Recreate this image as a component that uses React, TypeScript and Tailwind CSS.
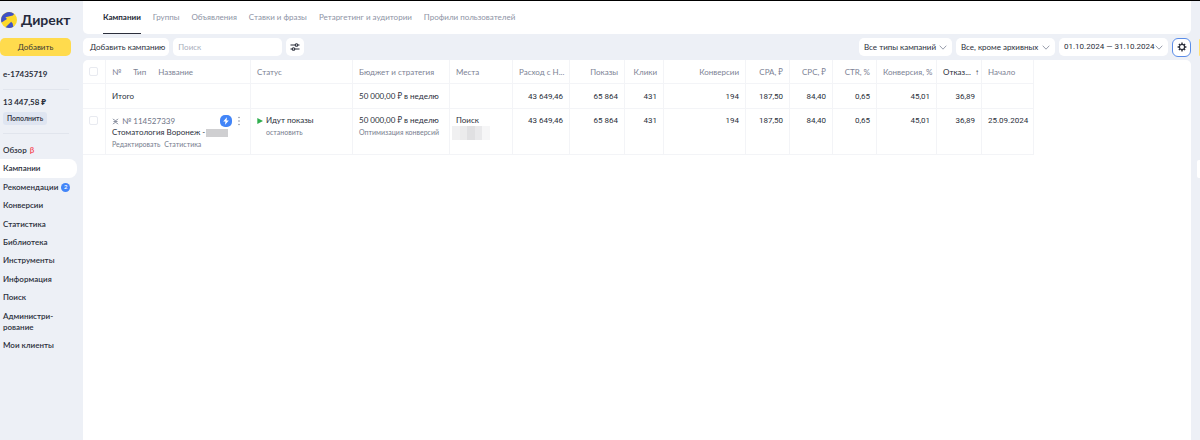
import type { ReactNode } from "react";

const tabs = ["Группы", "Объявления", "Ставки и фразы", "Ретаргетинг и аудитории", "Профили пользователей"];

const menu: { label: string; extra?: ReactNode; active?: boolean }[] = [
  { label: "Обзор", extra: <span className="text-[8px] font-bold text-[#f5525f]">β</span> },
  { label: "Кампании", active: true },
  {
    label: "Рекомендации",
    extra: (
      <span className="flex size-[9px] items-center justify-center rounded-full bg-[#4285f8] text-[6px] leading-none text-white">
        2
      </span>
    ),
  },
  { label: "Конверсии" },
  { label: "Статистика" },
  { label: "Библиотека" },
  { label: "Инструменты" },
  { label: "Информация" },
  { label: "Поиск" },
  { label: "Администри-\nрование" },
  { label: "Мои клиенты" },
];

const metrics = [
  { title: "Расход с Н...", value: "43 649,46" },
  { title: "Показы", value: "65 864" },
  { title: "Клики", value: "431" },
  { title: "Конверсии", value: "194" },
  { title: "CPA, ₽", value: "187,50" },
  { title: "CPC, ₽", value: "84,40" },
  { title: "CTR, %", value: "0,65" },
  { title: "Конверсия, %", value: "45,01" },
];

function Logo() {
  return (
    <svg viewBox="0 0 16 16" className="size-4 shrink-0" aria-hidden="true">
      <circle cx="8" cy="8" r="8" fill="#fcd92b" />
      <path d="M0.2 9.4A8 8 0 0 1 13.2 2L11.8 3.6L4.4 5.2L6 7L0.6 10.6Z" fill="#3f51c6" />
      <path d="M4.6 15.2L10.2 9.8L11.6 11.4L12.4 14.7Q8.6 17 4.6 15.2Z" fill="#3f51c6" />
    </svg>
  );
}

function Chevron() {
  return (
    <svg viewBox="0 0 8 5" className="pointer-events-none col-start-1 row-start-1 mr-[5px] h-[5px] w-2 self-center justify-self-end" aria-hidden="true">
      <path d="M0.7 0.7L4 4.2L7.3 0.7" fill="none" stroke="#8d93a3" strokeWidth="0.9" />
    </svg>
  );
}

function Dropdown({ label, text, className }: { label: string; text: string; className: string }) {
  return (
    <div className={`grid ${className}`}>
      <select aria-label={label} className="col-start-1 row-start-1 h-[18px] w-full appearance-none rounded-[5px] bg-white pl-[5px] text-[8px] leading-[18px]">
        <option>{text}</option>
      </select>
      <Chevron />
    </div>
  );
}

function Check({ label }: { label: string }) {
  return (
    <input
      type="checkbox"
      aria-label={label}
      className="block size-[9px] appearance-none rounded-[2px] border border-[#e8eaf0] bg-white"
    />
  );
}

const cell = "border-r border-b border-[#f3f4f7] px-[6px] align-top font-normal";
const head = `${cell} h-6 pt-[7px] text-[#7c8294]`;
const number = `${cell} text-right font-['Roboto','Noto_Sans',sans-serif]`;

export default function App() {
  return (
    <div className="flex min-h-screen border-t border-black bg-[#edf0f6] font-['Lato','Noto_Sans',sans-serif] text-[8px] leading-[11px] text-[#2b2f3b]">
      <aside className="flex w-[83px] shrink-0 flex-col">
        <a href="#" className="mt-[10px] flex h-[18px] items-center gap-1 pl-px text-[14px] leading-[18px] font-bold text-[#252a3d]">
          <Logo />
          Директ
        </a>
        <button type="button" className="mt-[9px] h-[18px] w-[71px] rounded-[5px] bg-[#ffdb4d] text-[8px] text-[#3b3a33]">
          Добавить
        </button>
        <div className="mt-[13px] ml-[3px] w-[66px] border-b border-[#e1e5ed] pb-[9px] font-bold">e-17435719</div>
        <div className="ml-[3px] w-[66px] border-b border-[#e1e5ed] pt-[7px] pb-2">
          <div className="font-bold">13 447,58 ₽</div>
          <button type="button" className="mt-1 h-[13px] rounded-[3px] bg-[#dfe5f1] px-[4px] text-[7px] leading-[13px] font-semibold">
            Пополнить
          </button>
        </div>
        <nav className="mt-[7px] flex h-[214px] flex-col font-semibold">
          {menu.map((m) => (
            <a
              key={m.label}
              href="#"
              className={`mr-[6px] flex flex-auto items-center gap-[3px] py-[3px] pl-[3px] whitespace-pre ${m.active ? "rounded-r-[8px] bg-white" : ""}`}
            >
              {m.label}
              {m.extra}
            </a>
          ))}
        </nav>
      </aside>

      <main className="flex min-w-0 flex-1 flex-col">
        <nav className="flex h-[33px] gap-3 rounded-b-[5px] bg-white pl-5 leading-[33px] text-[#8d93a5]">
          <a href="#" className="border-b border-[#2b2f3b] font-bold text-[#252a36]">Кампании</a>
          {tabs.map((t) => (
            <a key={t} href="#">{t}</a>
          ))}
        </nav>

        <div className="flex h-[26px] items-center gap-1">
          <button type="button" className="h-[18px] rounded-[5px] bg-white pr-1 pl-[7px] text-[8px]">Добавить кампанию</button>
          <input
            aria-label="Поиск"
            placeholder="Поиск"
            className="h-[18px] w-[109px] rounded-[5px] bg-white px-[5px] text-[8px] placeholder:text-[#a9aebb]"
          />
          <button type="button" aria-label="Фильтры" className="flex size-[18px] items-center justify-center rounded-[5px] bg-white">
            <svg viewBox="0 0 10 8" className="h-2 w-[10px]" fill="none" stroke="#2b2f3b" strokeWidth="1.1">
              <path d="M0.5 2H5M8 2H9.5M0.5 6H2M5 6H9.5" />
              <circle cx="6.5" cy="2" r="1.3" />
              <circle cx="3.5" cy="6" r="1.3" />
            </svg>
          </button>
          <div className="ml-auto flex items-center gap-1">
            <Dropdown label="Типы кампаний" text="Все типы кампаний" className="w-[93px]" />
            <Dropdown label="Статус кампаний" text="Все, кроме архивных" className="w-[99px]" />
            <Dropdown label="Период" text="01.10.2024 — 31.10.2024" className="w-[109px] font-['Roboto',sans-serif]" />
            <button type="button" aria-label="Настройки" className="flex size-[19px] items-center justify-center rounded-[6px] border border-[#5b8de8] bg-white">
              <svg viewBox="0 0 10 10" className="size-[10px]" fill="none" stroke="#2b2f3b">
                <circle cx="5" cy="5" r="2.6" strokeWidth="1.2" />
                <path d="M5 2.2V0.6M5 7.8V9.4M2.2 5H0.6M7.8 5H9.4M3 3L1.9 1.9M7 3L8.1 1.9M3 7L1.9 8.1M7 7L8.1 8.1" strokeWidth="1.4" />
              </svg>
            </button>
          </div>
        </div>

        <section className="flex-1 rounded-t-[5px] bg-white">
          <table className="w-[951px] table-fixed border-separate border-spacing-0 text-left">
            <colgroup>
              <col className="w-[23px]" />
              <col className="w-[145px]" />
              <col className="w-[102px]" />
              <col className="w-[97px]" />
              <col className="w-[63px]" />
              <col className="w-[57px]" />
              <col className="w-[55px]" />
              <col className="w-[39px]" />
              <col className="w-[82px]" />
              <col className="w-[44px]" />
              <col className="w-[43px]" />
              <col className="w-[44px]" />
              <col className="w-[60px]" />
              <col className="w-[45px]" />
              <col className="w-[52px]" />
            </colgroup>
            <thead>
              <tr className="whitespace-nowrap">
                <th className={head}><Check label="Выбрать все" /></th>
                <th className={head}>
                  <div className="flex gap-3"><span>№</span><span>Тип</span><span>Название</span></div>
                </th>
                <th className={head}>Статус</th>
                <th className={head}>Бюджет и стратегия</th>
                <th className={head}>Места</th>
                {metrics.map((m) => (
                  <th key={m.title} className={`${head} text-right`}>{m.title}</th>
                ))}
                <th className={head}>
                  <div className="-mr-1 flex justify-between text-[#2b2f3b]">
                    <span>Отказ...</span>
                    <span className="font-['Roboto','Noto_Sans',sans-serif]">↑</span>
                  </div>
                </th>
                <th className={head}>Начало</th>
              </tr>
            </thead>
            <tbody>
              <tr>
                <td className={cell} />
                <td className={`${cell} h-[25px] pt-[7px]`}>Итого</td>
                <td className={cell} />
                <td className={`${cell} pt-[7px]`}>50 000,00 ₽ в неделю</td>
                <td className={cell} />
                {metrics.map((m) => (
                  <td key={m.title} className={`${number} pt-[7px]`}>{m.value}</td>
                ))}
                <td className={`${number} pt-[7px]`}>36,89</td>
                <td className={cell} />
              </tr>
              <tr>
                <td className={`${cell} h-[46px] pt-[7px]`}><Check label="Выбрать кампанию" /></td>
                <td className={`${cell} pt-[6px] whitespace-nowrap`}>
                  <div className="flex h-3 items-center text-[#6f7587]">
                    <svg viewBox="0 0 7 7" className="mr-[3px] size-[7px]" fill="none" stroke="#7c8294" strokeWidth="0.9" aria-hidden="true">
                      <path d="M1 0.8Q3.5 4.2 6 0.8M1 6.2Q3.5 2.8 6 6.2M1.5 3.5H5.5" />
                    </svg>
                    № 114527339
                    <svg viewBox="0 0 12 12" className="ml-auto size-3" aria-hidden="true">
                      <rect width="12" height="12" rx="5" fill="#4285f8" />
                      <path d="M6.9 2.2L3.2 6.6H5.4L5.1 9.8L8.8 5.4H6.6Z" fill="white" />
                    </svg>
                    <svg viewBox="0 0 4 10" className="mr-[3px] ml-[5px] h-[10px] w-1" fill="#8d93a3" aria-hidden="true">
                      <circle cx="2" cy="1.5" r="0.8" />
                      <circle cx="2" cy="5" r="0.8" />
                      <circle cx="2" cy="8.5" r="0.8" />
                    </svg>
                  </div>
                  <div className="flex items-center gap-px">
                    Стоматология Воронеж -
                    <span className="h-2 w-[22px] bg-[#cfcfd1]" />
                  </div>
                  <div className="flex gap-1 pt-px text-[7px] text-[#777d8e]">
                    <a href="#">Редактировать</a>
                    <a href="#">Статистика</a>
                  </div>
                </td>
                <td className={`${cell} pt-[6px]`}>
                  <div className="flex items-center gap-[3px]">
                    <svg viewBox="0 0 6 6" className="size-[6px]" aria-hidden="true"><path d="M0.3 0L6 3L0.3 6Z" fill="#2fae4e" /></svg>
                    Идут показы
                  </div>
                  <a href="#" className="block pt-px pl-[9px] text-[7px] text-[#777d8e]">остановить</a>
                </td>
                <td className={`${cell} pt-[6px] whitespace-nowrap`}>
                  50 000,00 ₽ в неделю
                  <div className="pt-px text-[7px] text-[#777d8e]">Оптимизация конверсий</div>
                </td>
                <td className={`${cell} pt-[6px]`}>
                  Поиск
                  <div className="-ml-1 flex h-[14px] w-[38px]">
                    <span className="flex-1 bg-[#f0f0f1]" />
                    <span className="flex-1 bg-[#ebebec]" />
                    <span className="flex-1 bg-[#e0e0e2]" />
                    <span className="flex-1 bg-[#e9e9eb]" />
                    <span className="flex-1 bg-[#f6f6f7]" />
                  </div>
                </td>
                {metrics.map((m) => (
                  <td key={m.title} className={`${number} pt-[6px]`}>{m.value}</td>
                ))}
                <td className={`${number} pt-[6px]`}>36,89</td>
                <td className={`${cell} pt-[6px] font-['Roboto',sans-serif]`}>25.09.2024</td>
              </tr>
            </tbody>
          </table>
        </section>
      </main>

      <div className="flex w-[9px] shrink-0 flex-col items-end">
        <span className="mt-[38px] h-[17px] w-px rounded-l-[5px] bg-[#ffe27a]" />
        <span className="mt-[104px] h-[18px] w-[3px] rounded-l-[2px] bg-white" />
      </div>
    </div>
  );
}
